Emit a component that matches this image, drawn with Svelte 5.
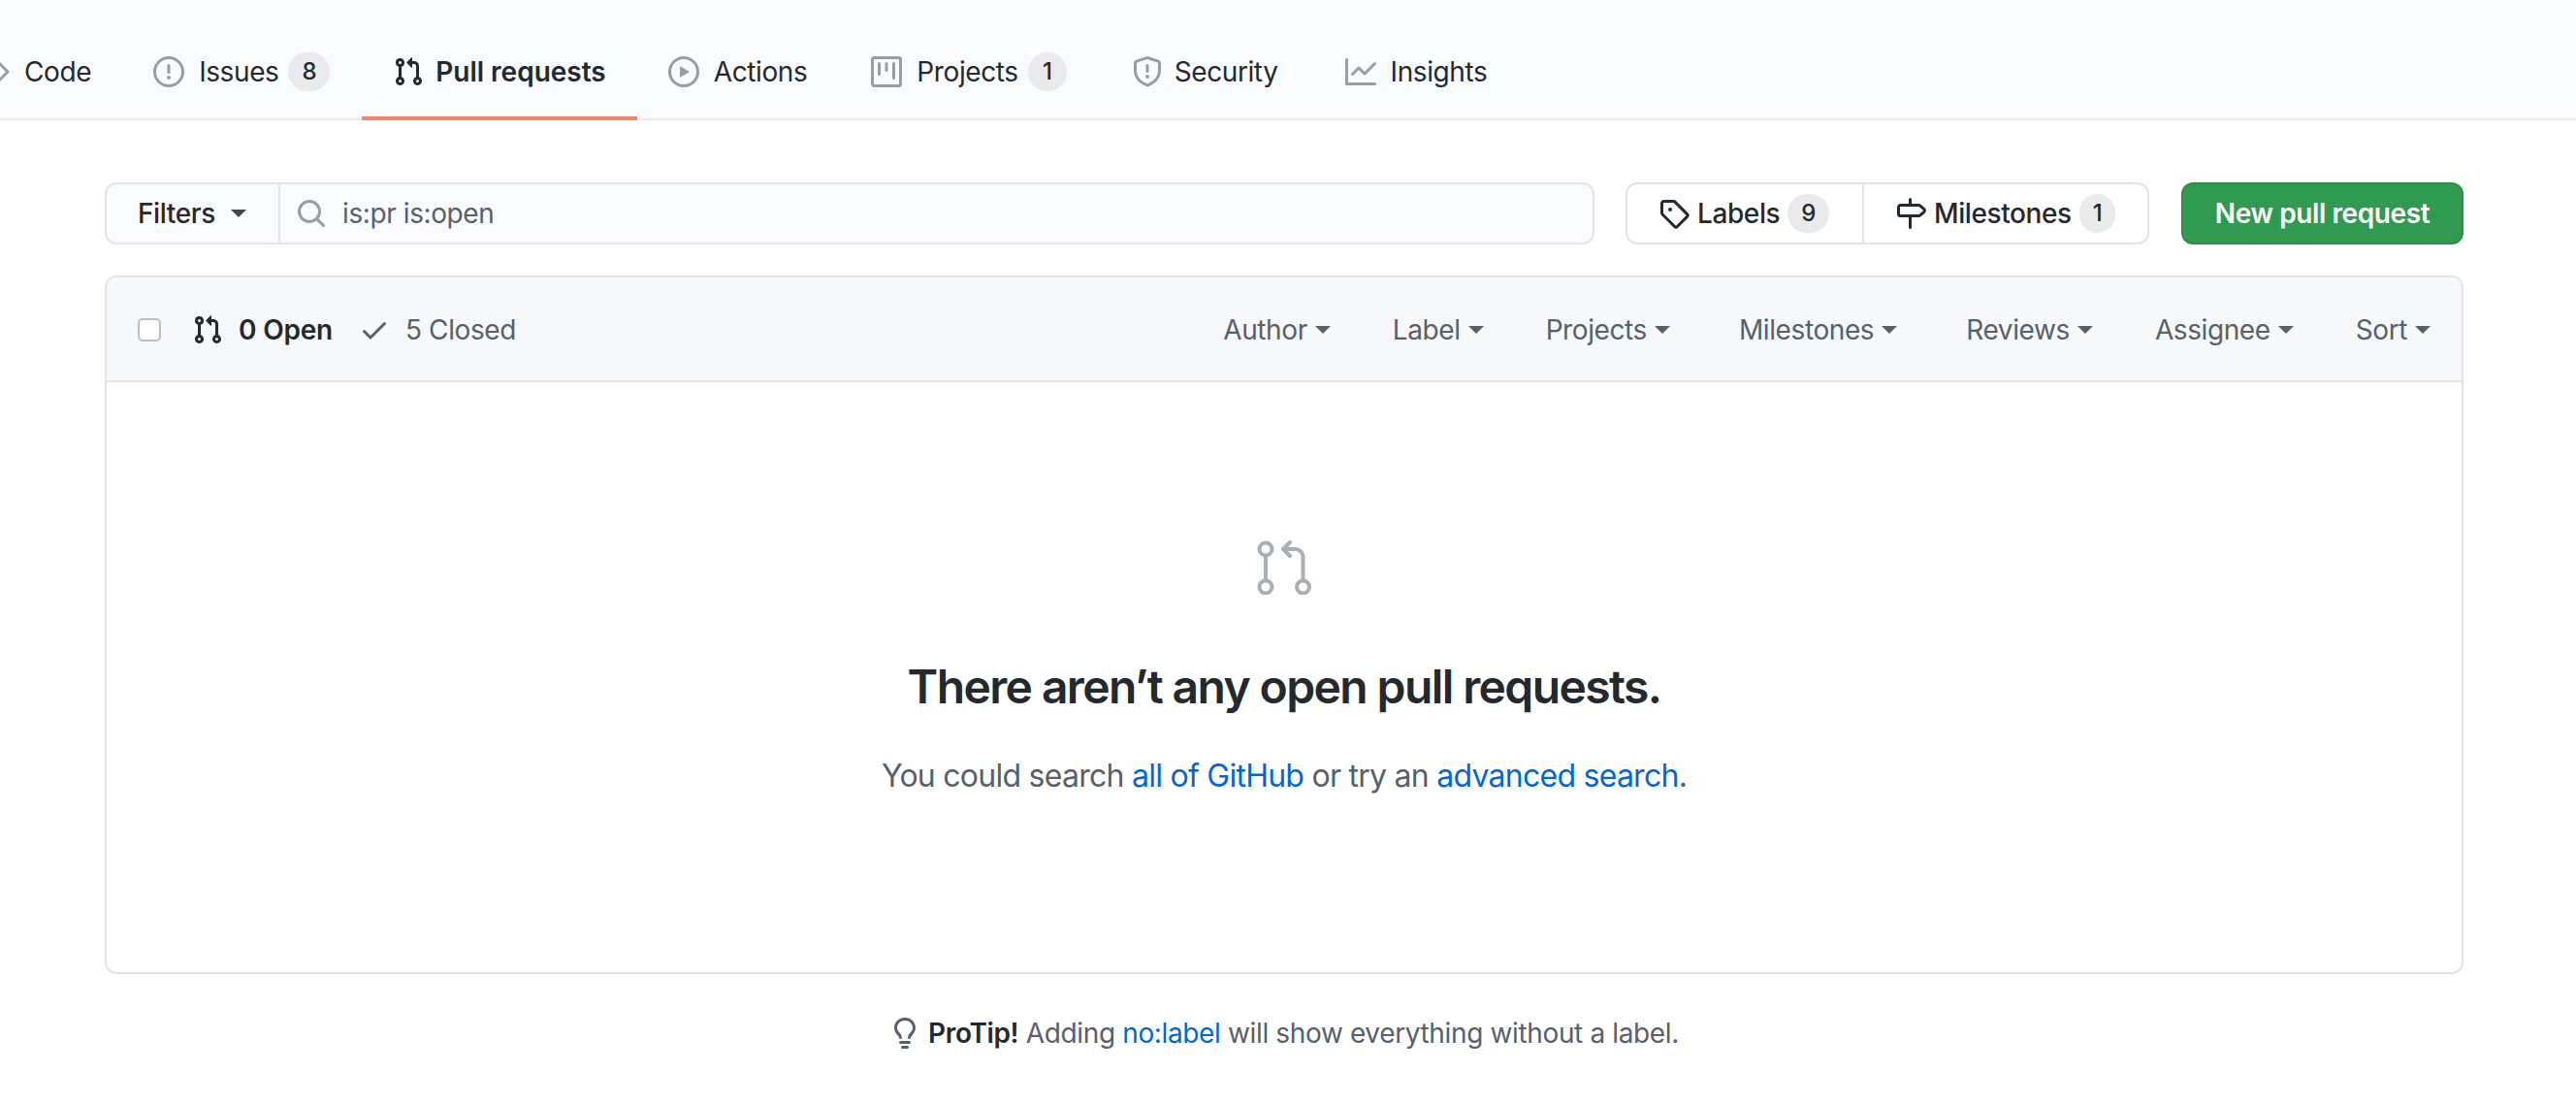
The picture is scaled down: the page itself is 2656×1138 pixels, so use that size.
<script>
  const PR = "M7.177 3.073L9.573.677A.25.25 0 0110 .854v4.792a.25.25 0 01-.427.177L7.177 3.427a.25.25 0 010-.354zM3.75 2.5a.75.75 0 100 1.5.75.75 0 000-1.5zm-2.25.75a2.25 2.25 0 113 2.122v5.256a2.251 2.251 0 11-1.5 0V5.372A2.25 2.25 0 011.5 3.25zM11 2.5h-1V4h1a1 1 0 011 1v5.628a2.251 2.251 0 101.5 0V5A2.5 2.5 0 0011 2.5zm1 10.25a.75.75 0 111.5 0 .75.75 0 01-1.5 0zM3.75 12a.75.75 0 100 1.5.75.75 0 000-1.5z"
  const tabs = [
    { label: "Code", d: "M4.72 3.22a.75.75 0 011.06 1.06L2.06 8l3.72 3.72a.75.75 0 11-1.06 1.06L.47 8.53a.75.75 0 010-1.06l4.25-4.25zm6.56 0a.75.75 0 10-1.06 1.06L13.94 8l-3.72 3.72a.75.75 0 101.06 1.06l4.25-4.25a.75.75 0 000-1.06l-4.25-4.25z" },
    { label: "Issues", count: 8, d: "M8 1.5a6.5 6.5 0 100 13 6.5 6.5 0 000-13zM0 8a8 8 0 1116 0A8 8 0 010 8zm9 3a1 1 0 11-2 0 1 1 0 012 0zm-.25-6.25a.75.75 0 00-1.5 0v3.5a.75.75 0 001.5 0v-3.5z" },
    { label: "Pull requests", active: true, d: PR },
    { label: "Actions", d: "M1.5 8a6.5 6.5 0 1113 0 6.5 6.5 0 01-13 0zM8 0a8 8 0 100 16A8 8 0 008 0zM6.379 5.227A.25.25 0 006 5.442v5.117a.25.25 0 00.379.214l4.264-2.559a.25.25 0 000-.428L6.379 5.227z" },
    { label: "Projects", count: 1, d: "M1.75 0A1.75 1.75 0 000 1.75v12.5C0 15.216.784 16 1.75 16h12.5A1.75 1.75 0 0016 14.25V1.75A1.75 1.75 0 0014.25 0H1.75zM1.5 1.75a.25.25 0 01.25-.25h12.5a.25.25 0 01.25.25v12.5a.25.25 0 01-.25.25H1.75a.25.25 0 01-.25-.25V1.75zM11.75 3a.75.75 0 00-.75.75v7.5a.75.75 0 001.5 0v-7.5a.75.75 0 00-.75-.75zm-8.25.75a.75.75 0 011.5 0v5.5a.75.75 0 01-1.5 0v-5.5zM8 3a.75.75 0 00-.75.75v3.5a.75.75 0 001.5 0v-3.5A.75.75 0 008 3z" },
    { label: "Security", d: "M7.467.133a1.75 1.75 0 011.066 0l5.25 1.68A1.75 1.75 0 0115 3.48V7c0 1.566-.32 3.182-1.303 4.682-.983 1.498-2.585 2.813-5.032 3.855a1.7 1.7 0 01-1.33 0c-2.447-1.042-4.049-2.357-5.032-3.855C1.32 10.182 1 8.566 1 7V3.48a1.75 1.75 0 011.217-1.667l5.25-1.68zm.61 1.429a.25.25 0 00-.153 0l-5.25 1.68a.25.25 0 00-.174.238V7c0 1.358.275 2.666 1.057 3.86.784 1.194 2.121 2.34 4.366 3.297a.2.2 0 00.154 0c2.245-.956 3.582-2.104 4.366-3.298C13.225 9.666 13.5 8.36 13.5 7V3.48a.25.25 0 00-.174-.237l-5.25-1.68zM9 10.5a1 1 0 11-2 0 1 1 0 012 0zm-.25-5.75a.75.75 0 10-1.5 0v3a.75.75 0 001.5 0v-3z" },
    { label: "Insights", d: "M1.5 1.75a.75.75 0 00-1.5 0v12.5c0 .414.336.75.75.75h14.5a.75.75 0 000-1.5H1.5V1.75zm14.28 2.53a.75.75 0 00-1.06-1.06L10 7.94 7.53 5.47a.75.75 0 00-1.06 0L3.22 8.72a.75.75 0 001.06 1.06L7 7.06l2.47 2.47a.75.75 0 001.06 0l5.25-5.25z" }
  ]
  const sorters = ["Author", "Label", "Projects", "Milestones", "Reviews", "Assignee", "Sort"]
</script>

<main>
  <nav class="tabs">
    {#each tabs as tab}
      <div class="tab" class:active={tab.active}>
        <svg class="icon" viewBox="0 0 16 16"><path fill-rule="evenodd" d={tab.d} /></svg>
        <span>{tab.label}</span>
        {#if tab.count}<span class="count">{tab.count}</span>{/if}
      </div>
    {/each}
  </nav>

  <div class="content">
    <div class="toolbar">
      <div class="search-group">
        <div class="filters">Filters <i class="caret"></i></div>
        <div class="search">
          <svg class="search-icon" viewBox="0 0 16 16"><path fill-rule="evenodd" d="M11.5 7a4.499 4.499 0 11-8.998 0A4.499 4.499 0 0111.5 7zm-.82 4.74a6 6 0 111.06-1.06l3.04 3.04a.75.75 0 11-1.06 1.06l-3.04-3.04z" /></svg>
          is:pr is:open
        </div>
      </div>
      <div class="links">
        <div class="link labels">
          <svg viewBox="0 0 16 16"><path fill-rule="evenodd" d="M2.5 7.775V2.75a.25.25 0 01.25-.25h5.025a.25.25 0 01.177.073l6.25 6.25a.25.25 0 010 .354l-5.025 5.025a.25.25 0 01-.354 0l-6.25-6.25a.25.25 0 01-.073-.177zm-1.5 0V2.75C1 1.784 1.784 1 2.75 1h5.025c.464 0 .91.184 1.238.513l6.25 6.25a1.75 1.75 0 010 2.474l-5.026 5.026a1.75 1.75 0 01-2.474 0l-6.25-6.25A1.75 1.75 0 011 7.775zM6 5a1 1 0 100 2 1 1 0 000-2z" /></svg>
          <span>Labels</span><span class="count">9</span>
        </div>
        <div class="link">
          <svg viewBox="0 0 16 16"><path fill-rule="evenodd" d="M7.75 0a.75.75 0 01.75.75V3h3.634c.414 0 .814.147 1.13.414l2.07 1.75a1.75 1.75 0 010 2.672l-2.07 1.75a1.75 1.75 0 01-1.13.414H8.5v5.25a.75.75 0 11-1.5 0V10H2.75A1.75 1.75 0 011 8.25v-3.5C1 3.784 1.784 3 2.75 3H7V.75A.75.75 0 017.75 0zm0 8.5h4.384a.25.25 0 00.161-.06l2.07-1.75a.25.25 0 000-.38l-2.07-1.75a.25.25 0 00-.161-.06H2.75a.25.25 0 00-.25.25v3.5c0 .138.112.25.25.25h5z" /></svg>
          <span>Milestones</span><span class="count">1</span>
        </div>
      </div>
      <div class="new-pr">New pull request</div>
    </div>

    <section class="box">
      <header class="box-header">
        <span class="checkbox"></span>
        <div class="states">
          <div class="state open">
            <svg viewBox="0 0 16 16"><path fill-rule="evenodd" d={PR} /></svg>
            0 Open
          </div>
          <div class="state closed">
            <svg viewBox="0 0 16 16"><path fill-rule="evenodd" d="M13.78 4.22a.75.75 0 010 1.06l-7.25 7.25a.75.75 0 01-1.06 0L2.22 9.28a.75.75 0 011.06-1.06L6 10.94l6.72-6.72a.75.75 0 011.06 0z" /></svg>
            5 Closed
          </div>
        </div>
        <div class="sorters">
          {#each sorters as s}
            <div class="sorter">{s} <i class="caret"></i></div>
          {/each}
        </div>
      </header>
      <div class="blank">
        <svg class="blank-icon" viewBox="0 0 56 56" stroke-width="4" stroke-linecap="round" stroke-linejoin="round">
          <circle cx="9" cy="9" r="6.5" />
          <circle cx="9" cy="48" r="6.5" />
          <circle cx="47.5" cy="48" r="6.5" />
          <path d="M9 15.5V41.5M47.5 41.5V17a8 8 0 0 0-8-8H27M34 2 27 9l7 7" />
        </svg>
        <h3>There aren’t any open pull requests.</h3>
        <p>You could search <a href="#top">all of GitHub</a> or try an <a href="#top">advanced search</a>.</p>
      </div>
    </section>

    <div class="protip">
      <svg viewBox="0 0 16 16"><path fill-rule="evenodd" d="M8 1.5c-2.363 0-4 1.69-4 3.75 0 .984.424 1.625.984 2.304l.214.253c.223.264.47.556.673.848.284.411.537.896.621 1.49a.75.75 0 01-1.484.211c-.04-.282-.163-.547-.37-.847a8.695 8.695 0 00-.542-.68c-.084-.1-.173-.205-.268-.32C3.201 7.75 2.5 6.766 2.5 5.25 2.5 2.31 4.863 0 8 0s5.5 2.31 5.5 5.25c0 1.516-.701 2.5-1.328 3.259-.095.115-.184.22-.268.319-.207.245-.383.453-.541.681-.208.3-.33.565-.37.847a.75.75 0 01-1.485-.212c.084-.593.337-1.078.621-1.489.203-.292.45-.584.673-.848.075-.088.147-.173.213-.253.561-.679.985-1.32.985-2.304 0-2.06-1.637-3.75-4-3.75zM6 15.25a.75.75 0 01.75-.75h2.5a.75.75 0 010 1.5h-2.5a.75.75 0 01-.75-.75zM5.75 12a.75.75 0 000 1.5h4.5a.75.75 0 000-1.5h-4.5z" /></svg>
      <span><strong>ProTip!</strong> Adding <a href="#top">no:label</a> will show everything without a label.</span>
    </div>
  </div>
</main>

<style>
  :global(body) {
    margin: 0;
    background: #fff;
    overflow: hidden;
  }

  main {
    height: 1138px;
    overflow: hidden;
    font-family: Inter, "Liberation Sans", sans-serif;
    font-size: 28px;
    letter-spacing: -0.4px;
    color: #24292e;
  }

  svg {
    display: block;
    flex: none;
    fill: currentColor;
  }

  a {
    color: #0366d6;
    text-decoration: none;
  }

  .tabs {
    display: flex;
    align-items: flex-end;
    height: 124px;
    box-sizing: border-box;
    background: #fafbfc;
    border-bottom: 2px solid #e8eaed;
    margin-left: -54px;
    width: calc(100% + 54px);
  }

  .tab {
    display: flex;
    align-items: center;
    gap: 15px;
    height: 92px;
    box-sizing: border-box;
    padding: 0 32px 4px;
    margin-bottom: -2px;
    border-bottom: 4px solid transparent;
  }

  .tab .icon {
    width: 32px;
    height: 32px;
    color: #959da5;
  }

  .tab .count {
    margin-left: -5px;
    min-width: 40px;
  }

  .tab.active {
    gap: 12px;
    margin-left: 1px;
    font-weight: 600;
    letter-spacing: 0;
    border-bottom-color: #f9826c;
  }

  .tab.active .icon {
    color: #24292e;
  }

  .tab:nth-child(5) {
    margin-left: 2px;
  }

  .tab:nth-child(6) {
    gap: 12px;
    margin-left: 3px;
  }

  .tab:nth-child(7) {
    margin-left: 5px;
  }

  .count {
    display: inline-block;
    box-sizing: border-box;
    height: 40px;
    line-height: 40px;
    padding: 0 14px;
    border-radius: 40px;
    background: #e9eaec;
    font-size: 24px;
    font-weight: 500;
    text-align: center;
  }

  .content {
    padding: 64px 116px 0 108px;
  }

  .toolbar {
    display: flex;
    align-items: stretch;
    height: 64px;
  }

  .search-group {
    display: flex;
    width: 1536px;
  }

  .filters {
    display: flex;
    align-items: center;
    gap: 16px;
    width: 181px;
    box-sizing: border-box;
    padding-left: 32px;
    font-weight: 500;
    background: #fafbfc;
    border: 2px solid #e1e4e8;
    border-radius: 12px 0 0 12px;
  }

  .caret {
    display: inline-block;
    width: 0;
    height: 0;
    border-style: solid;
    border-width: 8px 8px 0;
    border-color: currentColor transparent transparent;
    opacity: 0.85;
  }

  .search {
    flex: 1;
    display: flex;
    align-items: center;
    gap: 16px;
    padding-left: 16px;
    color: #586069;
    background: #fafbfc;
    border: 2px solid #e1e4e8;
    border-left-width: 0;
    border-radius: 0 12px 12px 0;
  }

  .search-icon {
    width: 32px;
    height: 32px;
    color: #959da5;
  }

  .links {
    display: flex;
    margin-left: 32px;
    width: 540px;
    box-sizing: border-box;
    border: 2px solid #e1e4e8;
    border-radius: 12px;
    font-weight: 500;
  }

  .link {
    display: flex;
    align-items: center;
    flex: 1;
    gap: 8px;
    padding-left: 32px;
    white-space: nowrap;
  }

  .link svg {
    width: 32px;
    height: 32px;
  }

  .labels {
    flex: none;
    width: 244px;
    box-sizing: border-box;
    border-right: 2px solid #e1e4e8;
  }

  .new-pr {
    display: flex;
    align-items: center;
    justify-content: center;
    margin-left: 33px;
    flex: 1;
    color: #fff;
    font-weight: 600;
    background: #2f9a50;
    border: 2px solid #2c8f4a;
    border-radius: 12px;
  }

  .box {
    margin-top: 32px;
    box-sizing: border-box;
    height: 720px;
    border: 2px solid #e1e4e8;
    border-radius: 12px;
    overflow: hidden;
  }

  .box-header {
    display: flex;
    align-items: center;
    height: 108px;
    box-sizing: border-box;
    padding: 2px 32px 0;
    background: #f6f8fa;
    border-bottom: 2px solid #e1e4e8;
    color: #586069;
  }

  .checkbox {
    width: 24px;
    height: 24px;
    box-sizing: border-box;
    background: #fff;
    border: 2px solid #bbbfc3;
    border-radius: 5px;
  }

  .states {
    display: flex;
    align-items: center;
    gap: 27px;
    margin-left: 32px;
  }

  .state {
    display: flex;
    align-items: center;
    gap: 16px;
  }

  .state svg {
    width: 32px;
    height: 32px;
  }

  .open {
    color: #24292e;
    font-weight: 600;
    letter-spacing: -0.2px;
  }

  .sorters {
    display: flex;
    gap: 64px;
    margin-left: auto;
  }

  .sorter {
    display: flex;
    align-items: center;
    gap: 8px;
  }

  .sorter .caret {
    opacity: 1;
  }

  .sorter:nth-child(4) {
    margin: 0 7px;
  }

  .blank {
    display: flex;
    flex-direction: column;
    align-items: center;
    padding-top: 163px;
  }

  .blank-icon {
    width: 56px;
    height: 56px;
    fill: none;
    stroke: #a9afb6;
  }

  h3 {
    margin: 65px 0 0;
    font-size: 48px;
    letter-spacing: -1.6px;
    line-height: 60px;
    font-weight: 600;
  }

  p {
    margin: 38px 0 0;
    font-size: 32px;
    letter-spacing: -0.74px;
    line-height: 48px;
    color: #586069;
  }

  .protip {
    display: flex;
    justify-content: center;
    align-items: center;
    gap: 8px;
    margin-top: 40px;
    color: #586069;
    letter-spacing: -0.36px;
    line-height: 42px;
  }

  .protip svg {
    width: 32px;
    height: 32px;
  }

  .protip strong {
    color: #24292e;
    font-weight: 600;
  }
</style>
